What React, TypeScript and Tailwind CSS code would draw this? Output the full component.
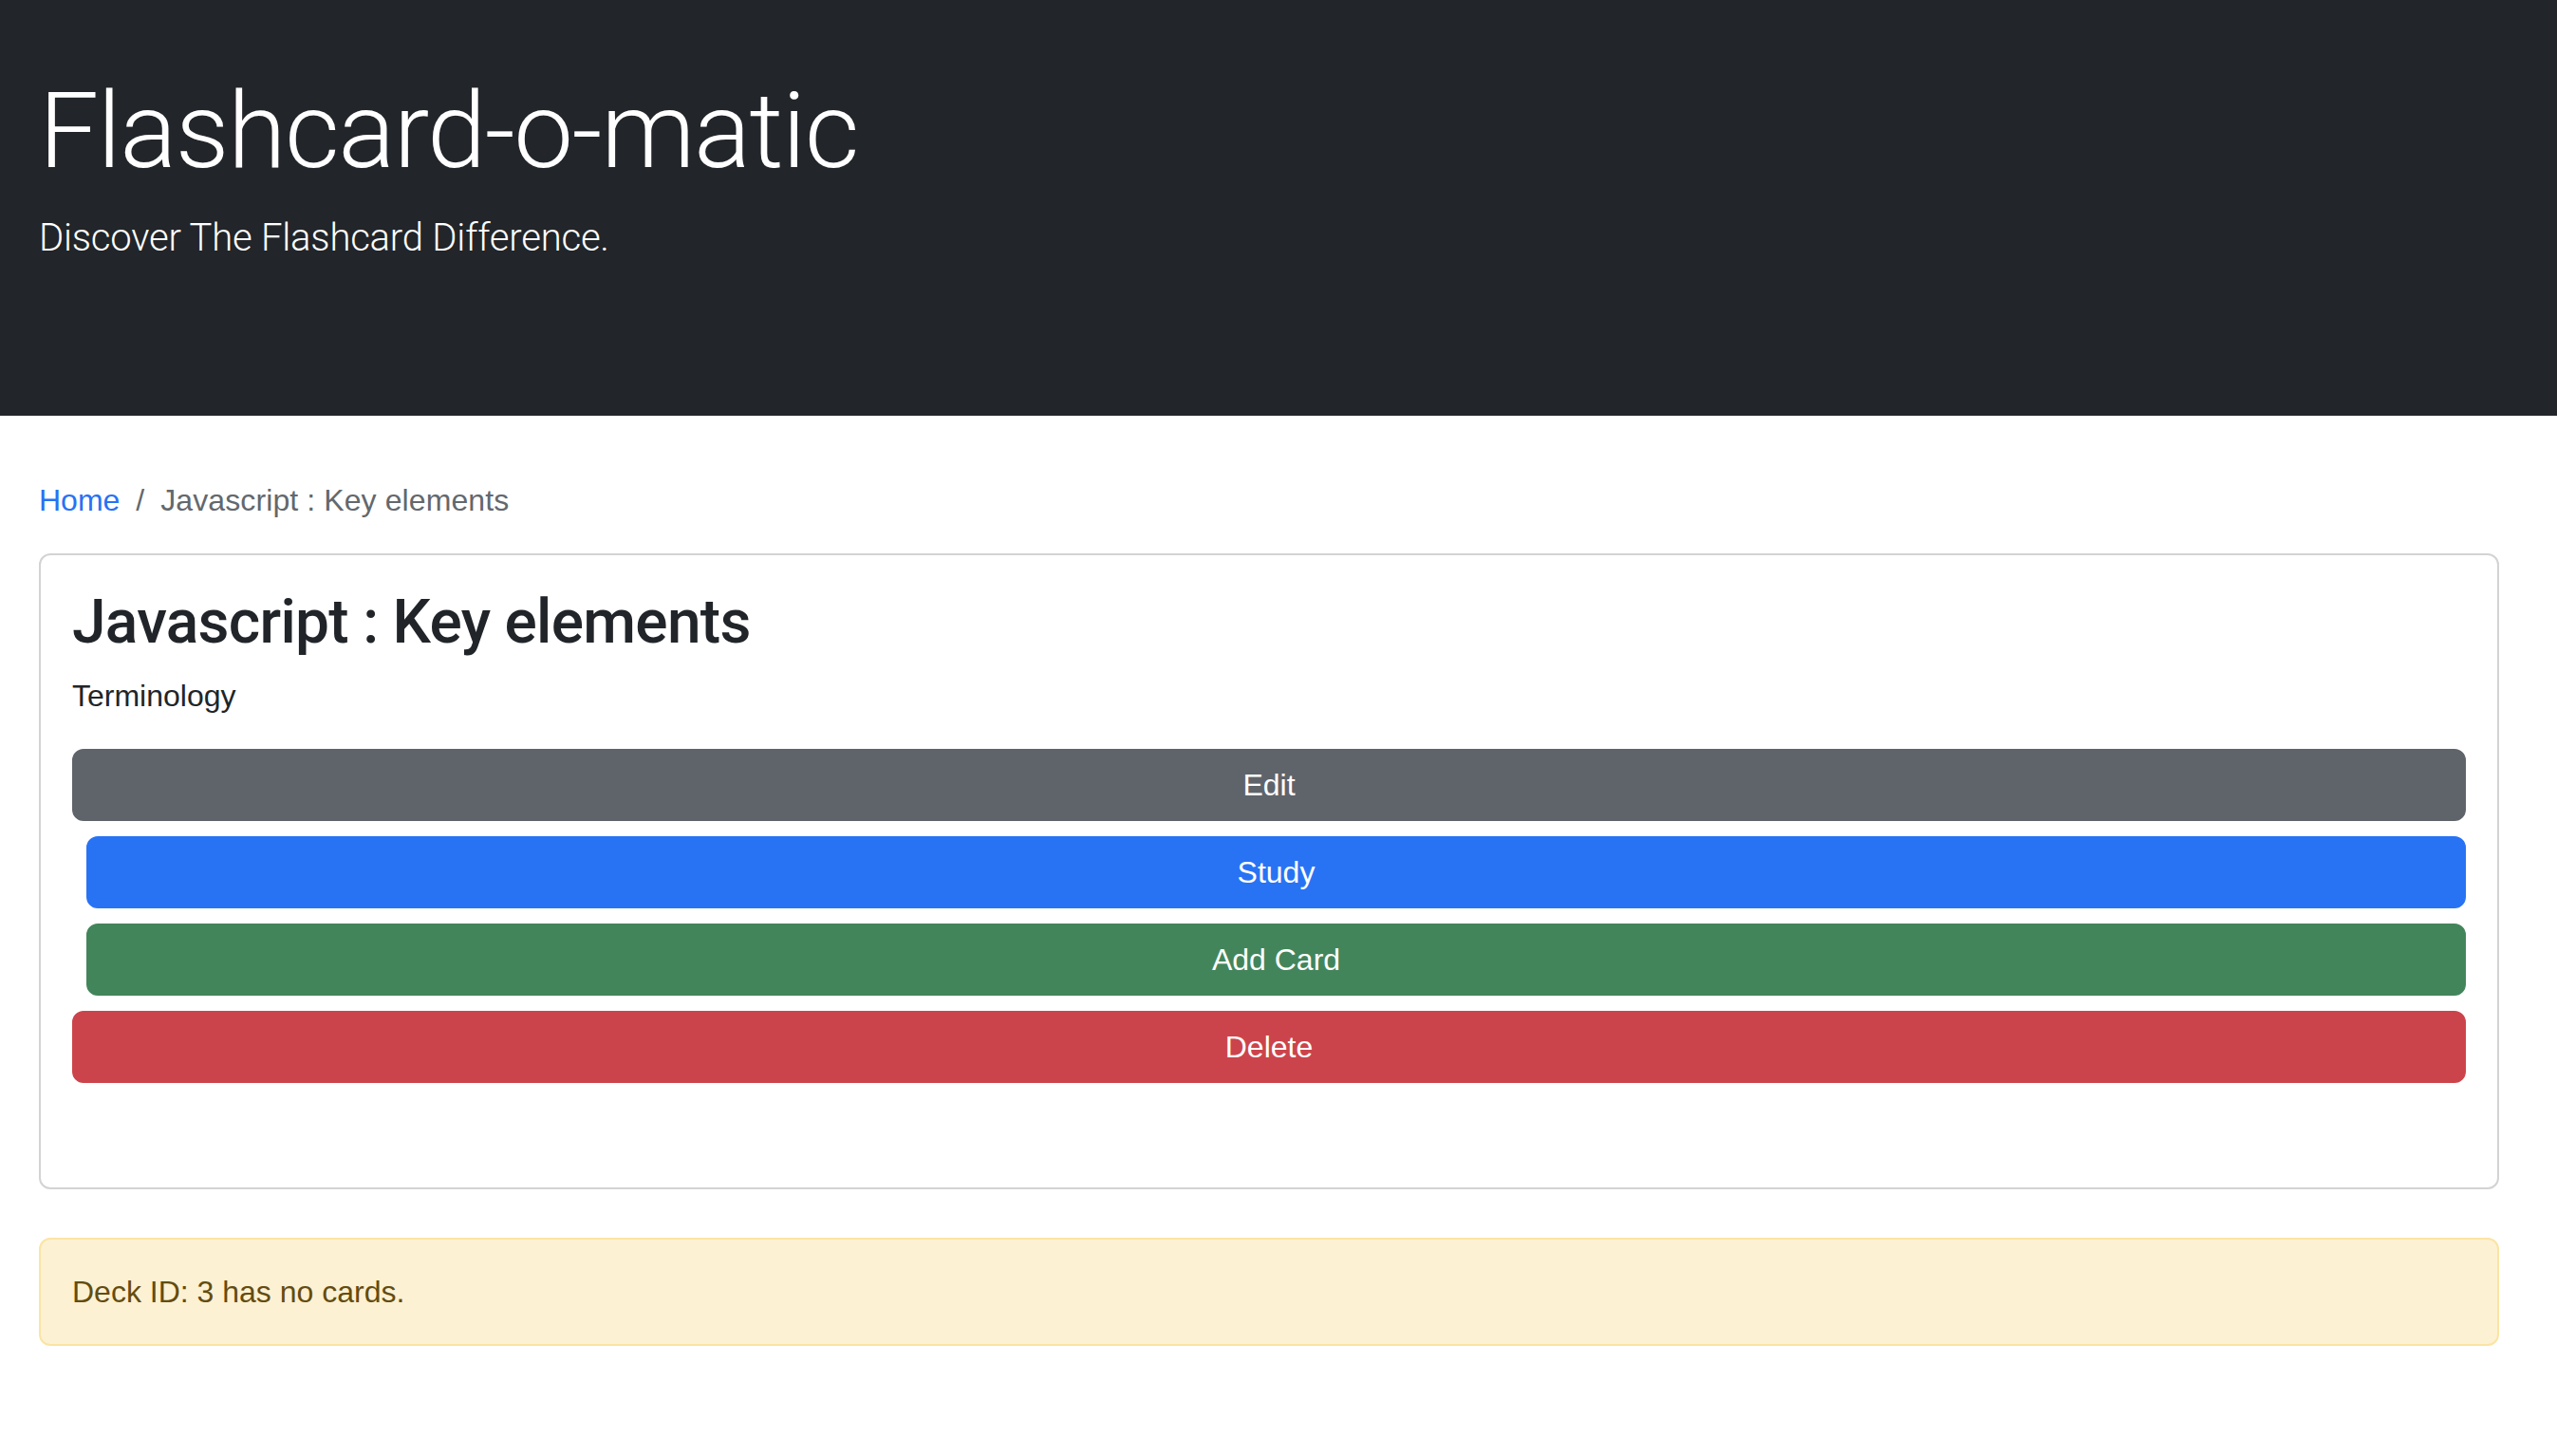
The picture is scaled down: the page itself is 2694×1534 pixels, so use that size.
export default function App() {
  return (
    <div className="min-h-screen bg-white font-['Liberation_Sans',Arial,sans-serif] text-[#212529]">
      {/* Header */}
      <header className="bg-[#222529] h-[438px] pl-[41px] pt-[71px] text-white">
        <h1 className="font-['Roboto',sans-serif] font-light text-[112px] leading-[134px] tracking-[-1.5px]">Flashcard-o-matic</h1>
        <p className="mt-[16px] font-['Roboto',sans-serif] font-light text-[40px] leading-[60px] tracking-[-0.2px]">
          Discover The Flashcard Difference.
        </p>
      </header>

      <main className="pl-[41px] pr-[61px]">
        {/* Breadcrumb */}
        <nav className="mt-[65px] flex items-center text-[32px] leading-[48px]">
          <a href="#" className="text-[#2872f3]">Home</a>
          <span className="px-[17px] text-[#63686d]">/</span>
          <span className="text-[#63686d] tracking-[0.1px]">Javascript : Key elements</span>
        </nav>

        {/* Deck card */}
        <div className="mt-[32px] rounded-[12px] border-2 border-[#d3d3d3] px-[33px] pt-[32px] pb-[110px]">
          <h2 className="font-['Roboto',sans-serif] font-medium text-[64px] leading-[77px] tracking-[-0.7px]">Javascript : Key elements</h2>
          <p className="mt-[15px] text-[32px] leading-[48px]">Terminology</p>
          <div className="mt-[32px] flex flex-col gap-[16px] text-[32px] leading-[48px] text-white">
            <button className="w-full rounded-[12px] border-2 border-[#5f646b] bg-[#5f646b] py-[12px] text-center">Edit</button>
            <button className="ml-[15px] rounded-[12px] border-2 border-[#2873f4] bg-[#2873f4] py-[12px] text-center">Study</button>
            <button className="ml-[15px] rounded-[12px] border-2 border-[#43855b] bg-[#43855b] py-[12px] text-center">Add Card</button>
            <button className="w-full rounded-[12px] border-2 border-[#cc444b] bg-[#cc444b] py-[12px] text-center">Delete</button>
          </div>
        </div>

        {/* Empty deck notice */}
        <div className="mt-[51px] rounded-[12px] border-2 border-[#fbe4a3] bg-[#fdf1d3] px-[33px] py-[31px] text-[32px] leading-[48px] text-[#634c10]">
          Deck ID: 3 has no cards.
        </div>
      </main>
    </div>
  );
}
